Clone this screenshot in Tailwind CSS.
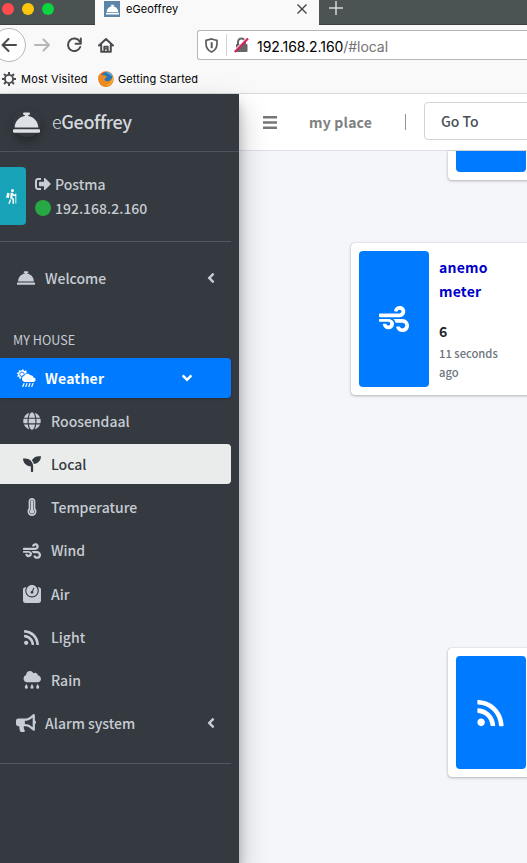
<!DOCTYPE html>
<html lang="en">
<head>
<meta charset="utf-8">
<title>eGeoffrey</title>
<script src="https://cdn.jsdelivr.net/npm/@tailwindcss/browser@4"></script>
</head>
<body class="w-[527px] h-[863px] overflow-hidden bg-[#f4f6f9] font-['Noto_Sans_CJK_SC',sans-serif] text-[14px] whitespace-nowrap">
<svg class="hidden">
  <symbol id="bell" viewBox="0 0 512 512"><path d="M288 130.540V112h16c8.840 0 16-7.160 16-16V80c0-8.840-7.160-16-16-16h-96c-8.840 0-16 7.160-16 16v16c0 8.840 7.160 16 16 16h16v18.540C115.490 146.110 32 239.180 32 352h448c0-112.820-83.490-205.890-192-221.460zM496 384H16c-8.840 0-16 7.160-16 16v32c0 8.840 7.160 16 16 16h480c8.840 0 16-7.160 16-16v-32c0-8.840-7.160-16-16-16z"/></symbol>
  <symbol id="rss" viewBox="0 0 448 512"><path d="M128.081 415.959c0 35.369-28.672 64.041-64.041 64.041S0 451.328 0 415.959s28.672-64.041 64.041-64.041 64.040 28.673 64.040 64.041zm175.660 47.250c-8.354-154.600-132.185-278.587-286.950-286.950C7.656 175.765 0 183.105 0 192.253v48.069c0 8.415 6.490 15.472 14.887 16.018 111.832 7.284 201.473 96.702 208.772 208.772.547 8.397 7.604 14.887 16.018 14.887h48.069c9.149.001 16.489-7.655 15.995-16.790zm144.249.288C439.596 229.677 251.465 40.445 16.503 32.010 7.473 31.686 0 38.981 0 48.016v48.068c0 8.625 6.835 15.645 15.453 15.999 191.179 7.839 344.627 161.316 352.465 352.465.353 8.618 7.373 15.453 15.999 15.453h48.068c9.034-.001 16.329-7.474 16.005-16.504z"/></symbol>
  <symbol id="wind" viewBox="0 0 512 512"><path d="M156.700 256H16c-8.800 0-16 7.200-16 16v16c0 8.800 7.200 16 16 16h142.200c15.900 0 30.800 10.900 33.400 26.600 3.300 20-12.100 37.400-31.600 37.400-14.100 0-26.100-9.200-30.400-21.900-2.100-6.300-8.600-10.100-15.200-10.100H81.600c-9.800 0-17.700 8.800-15.900 18.400 8.600 44.100 47.600 77.600 94.200 77.600 57.100 0 102.700-50.100 95.200-108.600C249 291 205.400 256 156.700 256zM16 224h336c59.700 0 106.800-54.800 93.800-116.700-7.600-36.200-36.900-65.500-73.100-73.100-55.400-11.600-105.100 24.900-114.900 75.500-1.900 9.600 6.100 18.300 15.800 18.300h32.800c6.700 0 13.100-3.800 15.200-10.100C325.900 105.200 337.900 96 352 96c19.400 0 34.900 17.400 31.600 37.400-2.600 15.700-17.400 26.600-33.400 26.600H16c-8.800 0-16 7.200-16 16v32c0 8.800 7.200 16 16 16zm384 32H243.700c19.300 16.600 33.200 38.800 39.800 64H400c26.500 0 48 21.500 48 48s-21.500 48-48 48c-17.900 0-33.300-9.900-41.600-24.400-2.900-5-8.700-7.600-14.500-7.600h-33.800c-10.900 0-19 10.800-15.300 21.100 17.800 50.600 70.500 84.800 129.400 72.300 41.200-8.700 75.100-41.600 84.700-82.700C526 321.500 470.500 256 400 256z"/></symbol>
  <symbol id="angle" viewBox="0 0 256 512"><path d="M31.700 239l136-136c9.400-9.400 24.600-9.400 33.900 0l22.600 22.600c9.400 9.400 9.400 24.600 0 33.900L127.900 256l96.400 96.400c9.400 9.400 9.400 24.600 0 33.900L201.700 409c-9.400 9.400-24.600 9.400-33.900 0l-136-136c-9.500-9.400-9.500-24.600-.1-34z"/></symbol>
</svg>

<header class="flex flex-col h-[94px] bg-[#f9f9fa] border-b border-[#d8d8da] font-['Inter',sans-serif] text-black">
  <div class="flex h-[25px] shrink-0">
    <div class="w-[95px] bg-[#4a5352] flex items-start pt-[3px] pl-[2px] gap-[8px] border-b border-[#3b4040]">
      <i class="size-3 rounded-full bg-[#ff4b4e]"></i><i class="size-3 rounded-full bg-[#fdc60c]"></i><i class="size-3 rounded-full bg-[#0ad53f]"></i>
    </div>
    <div class="flex-1 flex items-start pl-[9px] pr-[11px]">
      <span class="mt-px size-4 bg-[#5a84a8] flex items-center justify-center"><svg class="size-[13px] fill-white"><use href="#bell"/></svg></span>
      <span class="ml-[6px] text-[11px] leading-[18px] tracking-[0.050px]">eGeoffrey</span>
      <svg class="ml-auto mt-[3px] size-3" viewBox="0 0 12 12" fill="none" stroke="#444" stroke-width="1.400"><path d="M1.500 1.500l9 9M10.500 1.500l-9 9"/></svg>
    </div>
    <div class="w-[208px] bg-[#4b5453] border-b border-[#3b4040] pl-[10px] pt-px"><svg class="size-[14px]" viewBox="0 0 14 14" stroke="#d5d8d8" stroke-width="1.500"><path d="M7 0v14M0 7h14"/></svg></div>
  </div>
  <div class="flex h-[40px] shrink-0 items-center">
    <svg class="w-[120px] h-[40px] shrink-0" viewBox="0 0 120 40" fill="none" stroke="#4b4b4e" stroke-width="2" stroke-linecap="round" stroke-linejoin="round">
      <circle cx="9" cy="20" r="16.500" fill="#fff" stroke="#b8b8ba" stroke-width="1"/>
      <path d="M2.500 20H16M8.500 14l-6 6 6 6"/>
      <path d="M35 20h14M43.500 14.500l5.500 5.500-5.500 5.500" stroke="#b7b7b9"/>
      <path d="M79.700 16.500A6.300 6.300 0 1 0 80.200 22M80.800 13.500v5.200h-5.200"/>
      <path d="M99 20.500l7-6.500 7 6.500M101.200 20v6.800h9.600V20"/><path d="M104.200 26v-4.500h3.600V26M106 23v1" stroke-width="1.700"/>
    </svg>
    <div class="ml-[77px] flex-1 h-[30px] bg-white border border-r-0 border-[#b6b6b8] rounded-l-[3px] flex items-center">
      <svg class="ml-[7px] w-[13px] h-[15px]" viewBox="0 0 13 15" fill="none" stroke="#5d5d60" stroke-width="1.700"><path d="M6.500 1L12 2.500v3c0 4-2 7-5.500 8.500C3 12.500 1 9.500 1 5.500v-3z"/><path d="M6.700 4.200v6" stroke-width="2"/></svg>
      <i class="ml-[8px] w-px h-[22px] bg-[#d4d4d6]"></i>
      <svg class="ml-[7px] w-[15px] h-[16px]" viewBox="0 0 15 16"><path d="M4 8V5a3.500 3.500 0 0 1 7 0v3" fill="none" stroke="#66666a" stroke-width="2"/><rect x="2" y="7" width="11.500" height="8" rx="1" fill="#66666a"/><path d="M0 14L13.500 .5" stroke="#fff" stroke-width="1.500"/><path d="M.7 15L14 1.500" stroke="#d42556" stroke-width="2.200"/></svg>
      <span class="ml-[8px] mt-[2px] text-[14px] tracking-[-0.060px]">192.168.2.160<span class="text-[#737375]">/#local</span></span>
    </div>
  </div>
  <div class="flex h-[28px] items-center pl-[2px] text-[11px] tracking-[0.190px]">
    <svg class="size-[14px]" viewBox="0 0 14 14" fill="none" stroke="#4b4b50"><circle cx="7" cy="7" r="4.100" stroke-width="1.900"/><path d="M7 0v2.500M7 11.500V14M0 7h2.500M11.500 7H14M2 2l1.900 1.900M10.100 10.100L12 12M2 12l1.900-1.900M10.100 3.900L12 2" stroke-width="2"/></svg>
    <span class="ml-[5px] w-[76px]">Most Visited</span>
    <svg class="ml-px size-4" viewBox="0 0 16 16"><circle cx="8" cy="8" r="7.700" fill="#e66b1b"/><circle cx="8.700" cy="6.800" r="5.800" fill="#2877b8"/><path d="M8 1c3-.5 6 1.500 6.500 4.500L12 4z" fill="#58b4dd"/><path d="M.5 5L2 2.500l2 2c2-.7 4 0 5 1.500L6.500 8c0 2.500 4 3 6 1 1-1 1.500-2 1.700-3.500C17 10.500 13 16 7.500 15.700 2 15.500-.5 10 .5 5z" fill="#f08a22"/><path d="M14.400 5c2 5-2 10-7 10 4-1 7-4 7-10z" fill="#f9c431"/></svg>
    <span class="ml-[4px] tracking-[0.120px]">Getting Started</span>
  </div>
</header>

<div class="flex h-[769px]">
  <aside class="relative z-10 w-[239px] shrink-0 bg-[#343a40] text-[#c8ccd4] font-medium shadow-[0_14px_28px_rgba(0,0,0,.25),0_10px_10px_rgba(0,0,0,.22)]">
    <div class="h-[58px] border-b border-[#4b545c] flex items-center pl-[13px] text-[#d5d8dc]">
      <span class="size-[28px] rounded-full shadow-[0_5px_8px_rgba(0,0,0,.3)]"><svg class="size-[27px] fill-[#dee2e6]"><use href="#bell"/></svg></span>
      <span class="ml-[11px] pb-[4px] text-[18px] leading-[28px] tracking-[-0.370px]"><span class="font-light">e</span><span class="font-medium">Geoffrey</span></span>
    </div>
    <div class="w-[231px] h-[90px] border-b border-[#4f5962] flex pt-[15px]">
      <div class="w-[26px] h-[58px] bg-[#17a2b8] rounded-r-[4px] flex items-center pl-[6px]">
        <svg class="w-[11px] h-[15px]" viewBox="0 0 11 15" fill="#fff"><circle cx="6.500" cy="1.600" r="1.500"/><path d="M4.700 3.700h2.200l.8 1.800H10v1.400H7.100l-.5-.9-.4 2L8 10v4.700H6.500v-4L4.200 9zM4 10l1 1-1.200 3.700H2.300zM1.300 3.700l2.300.5L2.900 9 0 8.400z"/><path d="M9.400 4.500h.9v10h-.9z"/></svg>
      </div>
      <div class="ml-[9px] pt-[5px]">
        <div class="flex items-center h-6"><svg class="size-4 fill-current" viewBox="0 0 512 512"><path d="M497 273L329 441c-15 15-41 4.500-41-17v-96H152c-13.300 0-24-10.700-24-24v-96c0-13.300 10.700-24 24-24h136V88c0-21.400 25.900-32 41-17l168 168c9.300 9.400 9.300 24.600 0 34zM192 436v-40c0-6.600-5.400-12-12-12H96c-17.700 0-32-14.300-32-32V160c0-17.700 14.300-32 32-32h84c6.600 0 12-5.400 12-12V76c0-6.600-5.400-12-12-12H96c-53 0-96 43-96 96v192c0 53 43 96 96 96h84c6.600 0 12-5.400 12-12z"/></svg><span class="ml-1 leading-6">Postma</span></div>
        <div class="flex items-center h-6"><i class="size-4 rounded-full bg-[#28a745]"></i><span class="ml-1 leading-6">192.168.2.160</span></div>
      </div>
    </div>
    <nav class="pt-[17px] w-[231px] h-[522px] border-b border-[#4f5962]">
      <div class="h-10 flex items-center pl-[17px]"><svg class="mb-[2px] size-[18px] fill-current"><use href="#bell"/></svg><span class="ml-[10px] mb-[2px]">Welcome</span><svg class="ml-auto mr-[16px] mb-[2px] w-[8px] h-[16px] fill-current"><use href="#angle"/></svg></div>
      <div class="mt-[29px] h-[24px] leading-6 pl-[13px] text-[12.600px] font-normal">MY HOUSE</div>
      <div class="mt-[6px] h-10 flex items-center pl-[16px] bg-[#007bff] rounded-r-[4px] text-white font-bold shadow-[0_1px_3px_rgba(0,0,0,.2)]">
        <svg class="w-[20px] h-[18px]" viewBox="0 0 20 18" fill="#fff"><path d="M7 0l1.100 2 2.200-.8.2 2.300.8.500C9.500 4 8.500 5 8.200 6 6.300 6.200 5.300 7.500 5.200 9.200L3.300 10l.2-2.300L1 7.500 2.300 5.500.5 4l2.300-.7.100-2.300 2.100.8z"/><circle cx="6" cy="5.300" r="2.200" fill="none" stroke="#007bff" stroke-width=".9"/><path d="M8.500 13a3.200 3.200 0 0 1-.2-6.200C9 4.500 12.800 3.800 14.200 6.300c1.700-.5 3.200.7 3.200 2.200 3 .3 2.800 4.500 0 4.500z"/><path d="M8 14.500l-1.200 3M11 14.500l-1.200 3M14 14.500l-1.200 3M17 14.500l-1.200 3" stroke="#fff" stroke-width="1.200" stroke-linecap="round"/></svg>
        <span class="ml-[9px] tracking-[0.200px]">Weather</span><svg class="ml-auto mr-[40px] w-[8px] h-[16px] fill-white -rotate-90"><use href="#angle"/></svg>
      </div>
      <div class="pt-[3px] flex flex-col gap-[3.200px]">
        <div class="h-10 flex items-center pl-[23px]"><svg class="size-[18px] fill-current" viewBox="-8 0 512 512"><path d="M336.500 160C322 70.700 287.800 8 248 8s-74 62.700-88.500 152h177zM152 256c0 22.200 1.200 43.500 3.300 64h185.300c2.100-20.500 3.300-41.800 3.300-64s-1.200-43.500-3.300-64H155.300c-2.100 20.500-3.300 41.800-3.300 64zm324.700-96c-28.600-67.900-86.500-120.400-158-141.600 24.400 33.800 41.200 84.700 50 141.600h108zM177.200 18.400C105.800 39.600 47.800 92.100 19.300 160h108c8.700-56.900 25.500-107.800 49.900-141.600zM487.400 192H372.700c2.100 21 3.300 42.500 3.300 64s-1.200 43-3.300 64h114.600c5.500-20.500 8.600-41.800 8.600-64s-3.100-43.500-8.500-64zM120 256c0-21.500 1.200-43 3.300-64H8.600C3.200 212.500 0 233.800 0 256s3.200 43.500 8.600 64h114.600c-2-21-3.200-42.500-3.200-64zm39.500 96c14.500 89.300 48.700 152 88.500 152s74-62.700 88.500-152h-177zm159.300 141.600c71.400-21.200 129.400-73.700 158-141.600h-108c-8.800 56.900-25.600 107.800-50 141.600zM19.300 352c28.600 67.900 86.500 120.400 158 141.600-24.400-33.800-41.200-84.700-50-141.600h-108z"/></svg><span class="ml-[10px]">Roosendaal</span></div>
        <div class="h-10 flex items-center pl-[23px] bg-[#eaecec] text-[#343a40] rounded-r-[4px]"><svg class="size-[18px] fill-current" viewBox="0 0 512 512"><path d="M64 96H0c0 123.700 100.300 224 224 224v144c0 8.800 7.200 16 16 16h32c8.800 0 16-7.200 16-16V320C288 196.300 187.700 96 64 96zm384-64c-84.200 0-157.400 46.500-195.700 115.200 27.700 30.200 48.200 66.900 59 107.600C424 243.100 512 147.900 512 32h-64z"/></svg><span class="ml-[10px]">Local</span></div>
        <div class="h-10 flex items-center pl-[23px]"><svg class="size-[18px] fill-current" viewBox="-128 0 512 512"><path d="M192 384c0 35.346-28.654 64-64 64s-64-28.654-64-64c0-23.685 12.876-44.349 32-55.417V96c0-17.673 14.327-32 32-32s32 14.327 32 32v232.583c19.124 11.068 32 31.732 32 55.417zm32-84.653c19.912 22.563 32 52.194 32 84.653 0 70.696-57.303 128-128 128C57 512 0 454 0 383.333 0 351 12 322 32 299.347V96c0-53.019 42.981-96 96-96s96 42.981 96 96v203.347zM208 384c0-34.339-19.370-52.190-32-66.502V96c0-26.467-21.533-48-48-48S80 69.533 80 96v221.498C67 332 48 350 48 383.578 48 427 84 464 128 464c44.112 0 80-35.888 80-80z"/></svg><span class="ml-[10px]">Temperature</span></div>
        <div class="h-10 flex items-center pl-[23px]"><svg class="size-[18px] fill-current"><use href="#wind"/></svg><span class="ml-[10px]">Wind</span></div>
        <div class="h-10 flex items-center pl-[23px]"><svg class="size-[18px] fill-current" viewBox="0 0 512 512"><path d="M448 64h-25.980C438.440 92.280 448 125.010 448 160c0 105.870-86.130 192-192 192S64 265.870 64 160c0-34.990 9.560-67.720 25.980-96H64C28.710 64 0 92.710 0 128v320c0 35.290 28.710 64 64 64h384c35.290 0 64-28.710 64-64V128c0-35.290-28.710-64-64-64zM256 320c88.370 0 160-71.630 160-160S344.370 0 256 0 96 71.630 96 160s71.630 160 160 160zm-.3-151.940l33.580-78.360c3.500-8.170 12.940-11.920 21.030-8.410 8.120 3.480 11.880 12.890 8.410 21l-33.670 78.550C291.730 188 296 197.450 296 208c0 22.090-17.910 40-40 40s-40-17.910-40-40c0-21.980 17.760-39.770 39.700-39.940z"/></svg><span class="ml-[10px] mt-px">Air</span></div>
        <div class="h-10 flex items-center pl-[23px]"><svg class="size-[17px] mr-px mt-px fill-current"><use href="#rss"/></svg><span class="ml-[10px] mt-px">Light</span></div>
        <div class="h-10 flex items-center pl-[23px]"><svg class="size-[18px] fill-current" viewBox="0 0 18 18"><path d="M4 11.300a3.700 3.700 0 0 1-.9-7.200C3-.5 9-1.200 10.300 2.200c2-1.300 4.600 0 4.500 2.100 4.500 1 4 7-.3 7zM3.300 12.800c.4 1.500 1.500 2 1.500 3.400a1.500 1.500 0 0 1-3 0c0-1.400 1.100-1.900 1.500-3.400zM9 12.800c.4 1.500 1.500 2 1.500 3.400a1.500 1.500 0 0 1-3 0c0-1.400 1.100-1.900 1.500-3.400zM14.700 12.800c.4 1.500 1.500 2 1.500 3.400a1.500 1.500 0 0 1-3 0c0-1.400 1.100-1.900 1.500-3.400z"/></svg><span class="ml-[10px]">Rain</span></div>
        <div class="h-10 flex items-center pl-[16px]"><svg class="w-[20px] h-[18px] fill-current" viewBox="0 0 576 512"><path d="M576 240c0-23.630-12.950-44.040-32-55.120V32.010C544 23.260 537.020 0 512 0c-7.120 0-14.190 2.380-19.980 7.020l-85.030 68.030C364.280 109.190 310.660 128 256 128H64c-35.350 0-64 28.650-64 64v96c0 35.350 28.650 64 64 64h33.700c-1.390 10.480-2.180 21.140-2.180 32 0 39.770 9.260 77.350 25.560 110.940 5.190 10.690 16.520 17.060 28.400 17.060h74.280c26.050 0 41.690-29.840 25.900-50.560-16.400-21.520-26.150-48.360-26.150-77.440 0-11.110 1.620-21.790 4.410-32H256c54.660 0 108.280 18.810 150.980 52.950l85.030 68.030a32.023 32.023 0 0 0 19.980 7.020c24.920 0 32-22.780 32-32V295.130C563.050 284.040 576 263.630 576 240zm-96 141.420l-33.050-26.440C392.950 311.780 325.120 288 256 288v-96c69.120 0 136.950-23.780 190.950-66.980L480 98.580v282.840z"/></svg><span class="ml-[9px]">Alarm system</span><svg class="ml-auto mr-[16px] w-[8px] h-[16px] fill-current"><use href="#angle"/></svg></div>
      </div>
    </nav>
  </aside>

  <main class="flex-1 min-w-0 overflow-hidden flex flex-col">
    <div class="h-[57px] shrink-0 bg-white border-b border-[#dee2e6] flex items-center">
      <svg class="ml-[24px] w-[14px] h-[13px] shrink-0 fill-[#777]" viewBox="0 0 14 13"><path d="M0 0h14v2.400H0zM0 5.300h14v2.400H0zM0 10.600h14V13H0z"/></svg>
      <span class="ml-[32px] w-[95px] shrink-0 font-bold text-[#808080] tracking-[0.200px]">my place</span>
      <i class="ml-px w-px h-[16px] shrink-0 bg-[#939393]"></i>
      <div class="ml-[18px] mb-[3px] w-[120px] shrink-0 h-[38px] border border-[#ced4da] rounded-[4px] flex items-center pl-[16px] font-medium text-[#495057]"><span class="mt-[2px]">Go To</span></div>
    </div>
    <section class="ml-[209px] w-[120px] h-[29px] shrink-0 bg-white rounded-b-[4px] px-2 shadow-[0_0_1px_rgba(0,0,0,.3),0_1px_3px_rgba(0,0,0,.25)]"><div class="w-[70px] h-[21px] bg-[#007bff] rounded-b-[4px]"></div></section>
    <section class="mt-[63px] ml-[112px] w-[220px] h-[152px] shrink-0 bg-white rounded-[4px] p-2 flex shadow-[0_0_1px_rgba(0,0,0,.3),0_1px_3px_rgba(0,0,0,.25)]">
      <div class="w-[70px] h-[136px] bg-[#007bff] rounded-[4px] flex items-center justify-center"><svg class="size-[30px] fill-white"><use href="#wind"/></svg></div>
      <div class="ml-[10px] pt-[4px] leading-6">
        <div class="font-bold text-[#0000c8] tracking-[0.200px]">anemo<br>meter</div>
        <div class="mt-[16px] font-bold text-[#212529]">6</div>
        <div class="mt-px text-[11.200px] leading-[19px] font-medium text-[#6c757d]">11 seconds<br>ago</div>
      </div>
    </section>
    <section class="mt-[253px] ml-[209px] w-[120px] h-[129px] shrink-0 bg-white rounded-[4px] p-2 shadow-[0_0_1px_rgba(0,0,0,.3),0_1px_3px_rgba(0,0,0,.25)]">
      <div class="w-[70px] h-[113px] bg-[#007bff] rounded-[4px] flex items-center justify-center"><svg class="mr-px w-[27px] h-[30px] fill-white"><use href="#rss"/></svg></div>
    </section>
  </main>
</div>
</body>
</html>
